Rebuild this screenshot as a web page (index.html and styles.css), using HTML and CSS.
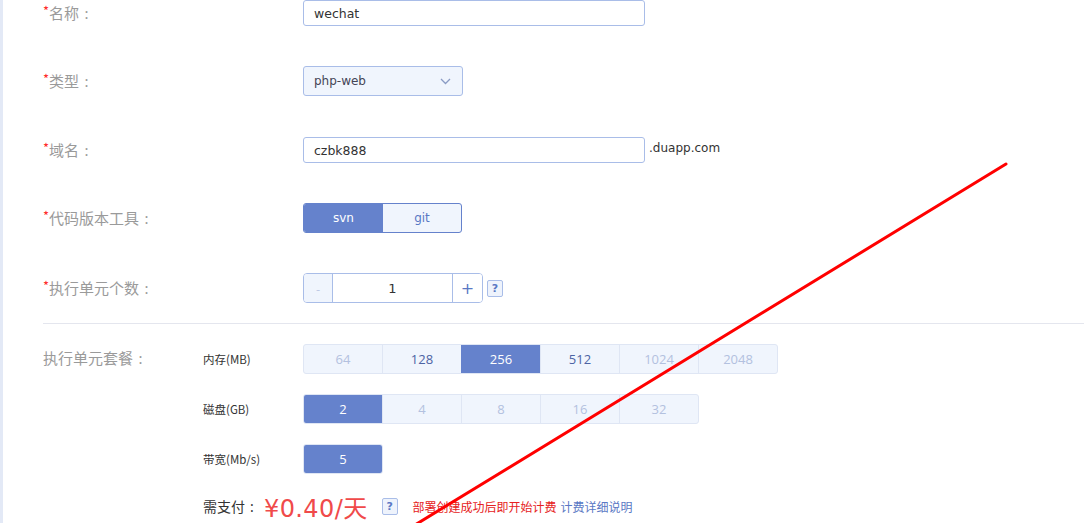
FILE: index.html
```html
<!DOCTYPE html>
<html lang="zh">
<head>
<meta charset="utf-8">
<title>创建应用</title>
<link rel="stylesheet" href="styles.css">
</head>
<body>
<div class="page">
  <div class="form">
    <div class="row r1">
      <div class="label"><span class="req">*</span>名称<span class="colon">:</span></div>
      <div class="field"><div class="input wide">wechat</div></div>
    </div>
    <div class="row r2">
      <div class="label"><span class="req">*</span>类型<span class="colon">:</span></div>
      <div class="field">
        <div class="select">php-web
          <svg class="caret" width="11" height="7" viewBox="0 0 11 7"><path d="M1 1l4.5 4.5L10 1" fill="none" stroke="#8a9bc4" stroke-width="1.3"/></svg>
        </div>
      </div>
    </div>
    <div class="row r3">
      <div class="label"><span class="req">*</span>域名<span class="colon">:</span></div>
      <div class="field"><div class="input wide">czbk888</div><span class="suffix">.duapp.com</span></div>
    </div>
    <div class="row r4">
      <div class="label"><span class="req">*</span>代码版本工具<span class="colon">:</span></div>
      <div class="field">
        <div class="toggle"><span class="t on">svn</span><span class="t">git</span></div>
      </div>
    </div>
    <div class="row r5">
      <div class="label"><span class="req">*</span>执行单元个数<span class="colon">:</span></div>
      <div class="field">
        <div class="stepper"><span class="minus">-</span><span class="num">1</span><span class="plus">+</span></div>
        <span class="help">?</span>
      </div>
    </div>
    <div class="divider"></div>
    <div class="pkg">
      <div class="pkg-label">执行单元套餐<span class="colon">:</span></div>
      <div class="pkg-body">
        <div class="sub">
          <div class="sublabel">内存(MB)</div>
          <div class="opts">
            <span class="o dis">64</span><span class="o">128</span><span class="o sel">256</span><span class="o">512</span><span class="o dis">1024</span><span class="o dis">2048</span>
          </div>
        </div>
        <div class="sub">
          <div class="sublabel">磁盘(GB)</div>
          <div class="opts">
            <span class="o sel">2</span><span class="o dis">4</span><span class="o dis">8</span><span class="o dis">16</span><span class="o dis">32</span>
          </div>
        </div>
        <div class="sub">
          <div class="sublabel">带宽(Mb/s)</div>
          <div class="opts">
            <span class="o sel">5</span>
          </div>
        </div>
        <div class="pay">
          <span class="paylabel">需支付<span class="colon small">:</span></span>
          <span class="price">¥0.40/天</span>
          <span class="help">?</span>
          <span class="note">部署创建成功后即开始计费</span>
          <a class="link">计费详细说明</a>
        </div>
      </div>
    </div>
  </div>
</div>
<svg class="mark" width="1084" height="523" viewBox="0 0 1084 523"><line x1="1006" y1="164" x2="410" y2="528" stroke="#ff0000" stroke-width="3" stroke-linecap="round"/></svg>
</body>
</html>
```
FILE: styles.css
```css
html, body {
  margin: 0;
  padding: 0;
  background: #ffffff;
  overflow: hidden;
}
body {
  font-family: "Noto Sans CJK SC", "Noto Sans", sans-serif;
  width: 1084px;
  height: 523px;
  position: relative;
}
.page {
  border-left: 3px solid #e3e9f6;
  height: 523px;
  box-sizing: border-box;
}
.form {
  padding-left: 40px;
}
.row {
  display: flex;
  align-items: center;
}
.r1 { height: 27px; margin-bottom: 39px; }
.r2 { height: 30px; margin-bottom: 41px; }
.r3 { height: 26px; margin-bottom: 40px; }
.r4 { height: 30px; margin-bottom: 40px; }
.r5 { height: 30px; }
.label {
  width: 260px;
  font-size: 15px;
  color: #9a9a9a;
  line-height: 20px;
  flex: none;
}
.colon {
  display: inline-block;
  width: 15px;
  text-align: center;
  font-family: "Noto Sans", sans-serif;
}
.colon.small { width: 14px; }
.req {
  color: #ff2a2a;
  font-size: 13px;
  position: relative;
  top: -3px;
}
.field {
  display: flex;
  align-items: center;
  height: 100%;
}
.input {
  box-sizing: border-box;
  height: 26px;
  border: 1px solid #a9bde8;
  border-radius: 3px;
  padding-left: 10px;
  font-family: "DejaVu Sans", sans-serif;
  font-size: 12.5px;
  color: #333;
  display: flex;
  align-items: center;
  background: #fff;
}
.r1 .input { align-self: flex-start; }
.wide { width: 342px; }
.suffix {
  font-family: "DejaVu Sans", sans-serif;
  font-size: 12px;
  color: #333;
  margin-left: 4px;
  position: relative;
  top: -2px;
}
.select {
  box-sizing: border-box;
  width: 160px;
  height: 30px;
  border: 1px solid #a9bde8;
  border-radius: 3px;
  background: #f0f5fd;
  padding: 0 10px;
  font-family: "DejaVu Sans", sans-serif;
  font-size: 12px;
  color: #445;
  display: flex;
  align-items: center;
  justify-content: space-between;
}
.caret { margin-right: 1px; }
.toggle {
  display: flex;
  box-sizing: border-box;
  width: 159px;
  height: 30px;
  border: 1px solid #6582cc;
  border-radius: 3px;
  overflow: hidden;
  background: #f0f5fd;
}
.t {
  flex: 1;
  display: flex;
  align-items: center;
  justify-content: center;
  font-family: "DejaVu Sans", sans-serif;
  font-size: 12px;
  color: #5a78c4;
}
.t.on {
  background: #6582cc;
  color: #fff;
  flex: none;
  width: 79px;
}
.stepper {
  display: flex;
  box-sizing: border-box;
  height: 30px;
  width: 180px;
  border: 1px solid #a9bde8;
  border-radius: 4px;
  overflow: hidden;
}
.stepper span {
  display: flex;
  align-items: center;
  justify-content: center;
}
.minus {
  width: 28px;
  background: #f0f5fd;
  color: #b9c6e2;
  font-size: 12px;
  border-right: 1px solid #a9bde8;
}
.num {
  flex: 1;
  background: #fff;
  color: #333;
  font-family: "DejaVu Sans", sans-serif;
  font-size: 13px;
}
.plus {
  width: 29px;
  border-left: 1px solid #a9bde8;
  color: #5a78c4;
  font-family: "DejaVu Sans", sans-serif;
  font-size: 16px;
  background: #fff;
}
.help {
  box-sizing: border-box;
  width: 16px;
  height: 17px;
  border: 1px solid #a9bde8;
  border-radius: 2px;
  background: #eef3fc;
  color: #5a78c4;
  font-family: "DejaVu Sans", sans-serif;
  font-weight: bold;
  font-size: 11px;
  display: inline-flex;
  align-items: center;
  justify-content: center;
  margin-left: 4px;
}
.divider {
  height: 1px;
  background: #e4e6ee;
  margin-top: 20px;
}
.pkg {
  display: flex;
  margin-top: 20px;
}
.pkg-label {
  width: 160px;
  flex: none;
  font-size: 15px;
  color: #9a9a9a;
  line-height: 20px;
  margin-top: 4px;
}
.pkg-body {
  display: flex;
  flex-direction: column;
}
.sub {
  display: flex;
  align-items: center;
  height: 30px;
  margin-bottom: 20px;
}
.sublabel {
  width: 100px;
  flex: none;
  font-size: 11.5px;
  color: #333;
}
.opts {
  display: flex;
  box-sizing: border-box;
  height: 30px;
  border: 1px solid #dfe6f4;
  border-radius: 3px;
  background: #f0f5fd;
  overflow: hidden;
}
.o {
  box-sizing: border-box;
  width: 79px;
  display: flex;
  align-items: center;
  justify-content: center;
  font-family: "Open Sans", sans-serif;
  font-size: 13px;
  color: #4d64a4;
  border-left: 1px solid #dfe6f4;
}
.o:first-child { border-left: none; width: 78px; }
.o.dis { color: #b3c1df; }
.o.sel { background: #6582cc; color: #fff; border-left-color: #6582cc; }
.pay {
  display: flex;
  align-items: center;
  height: 30px;
  margin-top: -3px;
}
.paylabel {
  font-size: 14px;
  color: #333;
  margin-right: 5px;
}
.price {
  font-family: "DejaVu Sans", "Noto Sans CJK SC", sans-serif;
  font-size: 24px;
  color: #f04a4a;
  margin-right: 10px;
  letter-spacing: 0.4px;
}
.pay .help { margin-left: 4px; margin-right: 15px; }
.note {
  font-size: 12px;
  color: #e62222;
}
.link {
  font-size: 12px;
  color: #5a78c4;
  margin-left: 4px;
}
.mark {
  position: absolute;
  left: 0;
  top: 0;
  pointer-events: none;
}
```
